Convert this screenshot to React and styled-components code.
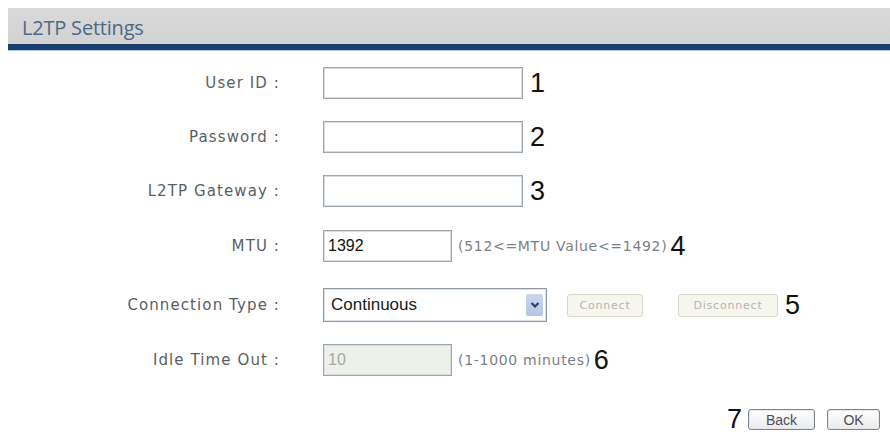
import React from "react";
import styled, { createGlobalStyle } from "styled-components";

const GlobalStyle = createGlobalStyle`
  html, body {
    margin: 0;
    padding: 0;
    background: #ffffff;
  }
  body {
    font-family: "DejaVu Sans", Verdana, sans-serif;
  }
`;

const rows = [
  { label: "User ID :", h: 54, kind: "text", mark: "1" },
  { label: "Password :", h: 54, kind: "text", mark: "2" },
  { label: "L2TP Gateway :", h: 54, kind: "text", mark: "3" },
  { label: "MTU :", h: 56, kind: "mtu", mark: "4" },
  { label: "Connection Type :", h: 62, kind: "conn", mark: "5" },
  { label: "Idle Time Out :", h: 48, kind: "idle", mark: "6" },
];

const ChevronIcon = () => (
  <svg width="10" height="8" viewBox="0 0 10 8">
    <path d="M1.5 2 L5 5.5 L8.5 2" fill="none" stroke="#2a3d66" strokeWidth="2.2" />
  </svg>
);

const FieldContent = ({ row }) => {
  if (row.kind === "mtu") {
    return (
      <>
        <TextBox $w={129} defaultValue="1392" />
        <Hint>(512&lt;=MTU Value&lt;=1492)</Hint>
        <Mark $gap={3}>{row.mark}</Mark>
      </>
    );
  }
  if (row.kind === "conn") {
    return (
      <>
        <SelectBox>
          <SelectText>Continuous</SelectText>
          <ArrowBtn>
            <ChevronIcon />
          </ArrowBtn>
        </SelectBox>
        <GhostButton $w={76} $ml={20}>Connect</GhostButton>
        <GhostButton $w={100} $ml={35}>Disconnect</GhostButton>
        <Mark $gap={7}>{row.mark}</Mark>
      </>
    );
  }
  if (row.kind === "idle") {
    return (
      <>
        <TextBox $w={129} $disabled defaultValue="10" disabled />
        <Hint>(1-1000 minutes)</Hint>
        <Mark $gap={3}>{row.mark}</Mark>
      </>
    );
  }
  return (
    <>
      <TextBox $w={200} />
      <Mark $gap={7}>{row.mark}</Mark>
    </>
  );
};

export default function App() {
  return (
    <>
      <GlobalStyle />
      <Page>
        <Header>
          <Title>L2TP Settings</Title>
        </Header>
        <Form>
          {rows.map((row) => (
            <Row key={row.label} $h={row.h}>
              <Label>{row.label}</Label>
              <Field>
                <FieldContent row={row} />
              </Field>
            </Row>
          ))}
        </Form>
        <Footer>
          <Mark $gap={0}>7</Mark>
          <PlainButton $w={67} $ml={6}>Back</PlainButton>
          <PlainButton $w={53} $ml={12}>OK</PlainButton>
        </Footer>
      </Page>
    </>
  );
}

const Page = styled.div`
  width: 890px;
  height: 440px;
  padding-top: 8px;
  box-sizing: border-box;
  overflow: hidden;
`;

const Header = styled.div`
  margin-left: 8px;
  height: 36px;
  background: linear-gradient(#d9d9d9, #d2d2d2);
  border-bottom: 6px solid #1b3f6c;
  box-shadow: 0 1px 0 #a9c9e6;
  display: flex;
  align-items: center;
  padding-left: 14px;
`;

const Title = styled.div`
  font-family: "Open Sans", "DejaVu Sans", sans-serif;
  font-size: 20px;
  color: #4c6986;
  letter-spacing: -0.2px;
  padding-top: 2px;
`;

const Form = styled.div`
  padding-top: 6px;
  display: flex;
  flex-direction: column;
`;

const Row = styled.div`
  height: ${(p) => p.$h}px;
  display: grid;
  grid-template-columns: 280px 1fr;
  column-gap: 43px;
  align-items: center;
`;

const Label = styled.div`
  text-align: right;
  font-size: 15px;
  letter-spacing: 1.1px;
  color: #5a5f64;
`;

const Field = styled.div`
  display: flex;
  align-items: center;
`;

const TextBox = styled.input`
  width: ${(p) => p.$w}px;
  height: 32px;
  box-sizing: border-box;
  border: 1px solid #9ea6ae;
  box-shadow: inset 0 0 0 1px #d8dde2;
  background: ${(p) => (p.$disabled ? "#eef0ea" : "#ffffff")};
  font-family: "Liberation Sans", Arial, sans-serif;
  font-size: 16px;
  color: ${(p) => (p.$disabled ? "#a8aaa4" : "#111111")};
  padding: 0 4px;
  margin: 0;
  outline: none;
`;

const Hint = styled.span`
  margin-left: 6px;
  font-size: 14px;
  letter-spacing: 0.7px;
  color: #7b7f83;
  white-space: nowrap;
`;

const Mark = styled.span`
  margin-left: ${(p) => p.$gap}px;
  font-family: "Liberation Sans", Arial, sans-serif;
  font-size: 27px;
  line-height: 1;
  color: #111111;
`;

const SelectBox = styled.div`
  width: 224px;
  height: 34px;
  box-sizing: border-box;
  border: 1px solid #8f9aa6;
  box-shadow: inset 0 0 0 1px #dbe1e8;
  background: #ffffff;
  display: flex;
  align-items: center;
  justify-content: space-between;
  padding: 0 3px 0 7px;
`;

const SelectText = styled.span`
  font-family: "Liberation Sans", Arial, sans-serif;
  font-size: 17px;
  color: #1a1a1a;
`;

const ArrowBtn = styled.span`
  width: 17px;
  height: 22px;
  background: linear-gradient(#c9d6f0, #b3c4e6);
  border-radius: 2px;
  display: flex;
  align-items: center;
  justify-content: center;
`;

const GhostButton = styled.span`
  margin-left: ${(p) => p.$ml}px;
  width: ${(p) => p.$w}px;
  height: 23px;
  box-sizing: border-box;
  border: 1px solid #d6d8c8;
  border-radius: 3px;
  background: #f6f6ee;
  display: flex;
  align-items: center;
  justify-content: center;
  font-size: 11px;
  letter-spacing: 0.8px;
  color: #b4b6ac;
`;

const Footer = styled.div`
  margin-top: 22px;
  display: flex;
  justify-content: flex-end;
  align-items: center;
  padding-right: 10px;
`;

const PlainButton = styled.span`
  margin-left: ${(p) => p.$ml}px;
  width: ${(p) => p.$w}px;
  height: 21px;
  box-sizing: border-box;
  border: 1px solid #7e848a;
  border-radius: 3px;
  box-shadow: inset 0 0 0 1px #e6e8ea;
  background: linear-gradient(#ffffff, #e9eaec);
  display: flex;
  align-items: center;
  justify-content: center;
  font-family: "Liberation Sans", Arial, sans-serif;
  font-size: 14px;
  color: #4a4f55;
`;
